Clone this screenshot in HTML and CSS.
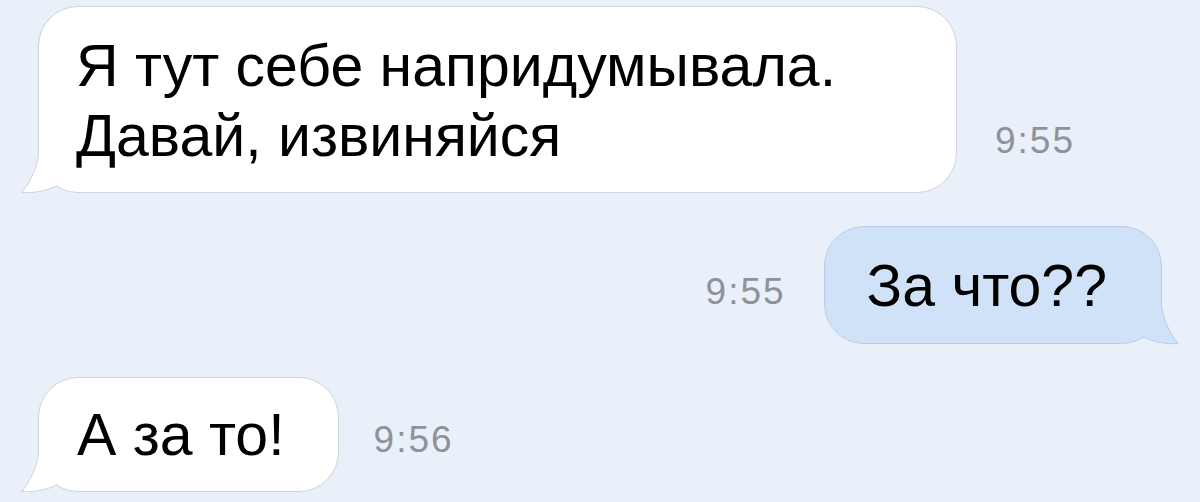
FILE: index.html
```html
<!DOCTYPE html>
<html lang="ru">
<head>
<meta charset="UTF-8">
<meta name="viewport" content="width=device-width, initial-scale=1.0">
<title>Сообщения</title>
<link rel="stylesheet" href="styles.css">
</head>
<body>
<div class="chat">
  <div class="row">
    <div class="bubble wide">
      Я тут себе напридумывала.<br>Давай, извиняйся
      <svg class="tail" viewBox="-17 -46 62 47" width="62" height="47"><path class="tail-fill" d="M0 -46 L0 -38 C-2 -22 -10 -8 -16 -0.5 C-6 0.5 9 -2 19.5 -7.5 L28 -20 L15 -46 Z"/><path class="tail-line" d="M0.5 -46 L0.5 -38 C-1.5 -22 -10 -8 -16 -0.5 C-6 0.5 9 -2 19.5 -7.5"/></svg>
    </div>
    <span class="time">9:55</span>
  </div>
  <div class="row out">
    <span class="time">9:55</span>
    <div class="bubble blue">
      За что??
      <svg class="tail" viewBox="-17 -46 62 47" width="62" height="47"><path class="tail-fill" d="M0 -46 L0 -38 C-2 -22 -10 -8 -16 -0.5 C-6 0.5 9 -2 19.5 -7.5 L28 -20 L15 -46 Z"/><path class="tail-line" d="M0.5 -46 L0.5 -38 C-1.5 -22 -10 -8 -16 -0.5 C-6 0.5 9 -2 19.5 -7.5"/></svg>
    </div>
  </div>
  <div class="row">
    <div class="bubble short">
      А за то!
      <svg class="tail" viewBox="-17 -46 62 47" width="62" height="47"><path class="tail-fill" d="M0 -46 L0 -38 C-2 -22 -10 -8 -16 -0.5 C-6 0.5 9 -2 19.5 -7.5 L28 -20 L15 -46 Z"/><path class="tail-line" d="M0.5 -46 L0.5 -38 C-1.5 -22 -10 -8 -16 -0.5 C-6 0.5 9 -2 19.5 -7.5"/></svg>
    </div>
    <span class="time near">9:56</span>
  </div>
</div>
</body>
</html>
```

FILE: styles.css
```css
body { margin: 0; background: #eaf0f9; font-family: "Liberation Sans", Arial, sans-serif; overflow: hidden; }
.chat { display: flex; flex-direction: column; gap: 33px; padding: 6px 38px 0 38px; }
.row { display: flex; align-items: flex-end; }
.row.out { justify-content: flex-end; }

.bubble { position: relative; box-sizing: border-box; background: #fff; border: 1px solid #cfd3da; border-radius: 40px; font-size: 59px; line-height: 70px; color: #000; }
.bubble.wide { width: 919px; padding: 24px 20px 21px 37px; }
.bubble.blue { background: #d0e2f8; border-color: #bacce6; padding: 24px 54px 22px 42px; }
.bubble.short { padding: 22px 53px 21px 38px; }

.tail { position: absolute; left: -18px; bottom: -2px; display: block; }
.tail-fill { fill: #fff; }
.tail-line { fill: none; stroke: #cfd3da; stroke-width: 1; }
.blue .tail { left: auto; right: -18px; transform: scaleX(-1); }
.blue .tail-fill { fill: #d0e2f8; }
.blue .tail-line { stroke: #bacce6; }

.time { font-size: 37px; line-height: 38px; letter-spacing: 2px; color: #8e939b; padding-bottom: 33px; margin-left: 38px; }
.out .time { margin-left: 0; margin-right: 38px; }
.time.near { margin-left: 35px; }
```
